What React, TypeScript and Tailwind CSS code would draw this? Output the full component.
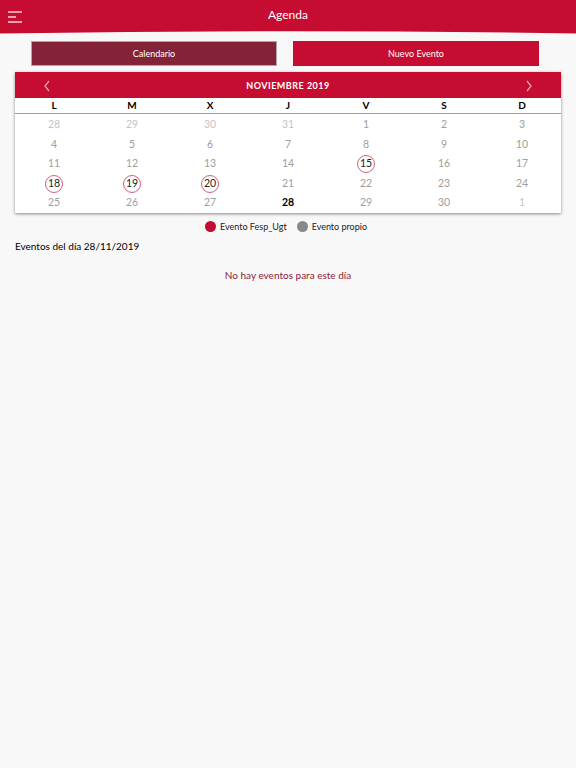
import React from 'react';

const RED = 'bg-[#c60c30]';

type Day = { n: number; out?: boolean; event?: boolean; today?: boolean };

const weeks: Day[][] = [
  [{ n: 28, out: true }, { n: 29, out: true }, { n: 30, out: true }, { n: 31, out: true }, { n: 1 }, { n: 2 }, { n: 3 }],
  [{ n: 4 }, { n: 5 }, { n: 6 }, { n: 7 }, { n: 8 }, { n: 9 }, { n: 10 }],
  [{ n: 11 }, { n: 12 }, { n: 13 }, { n: 14 }, { n: 15, event: true }, { n: 16 }, { n: 17 }],
  [{ n: 18, event: true }, { n: 19, event: true }, { n: 20, event: true }, { n: 21 }, { n: 22 }, { n: 23 }, { n: 24 }],
  [{ n: 25 }, { n: 26 }, { n: 27 }, { n: 28, today: true }, { n: 29 }, { n: 30 }, { n: 1, out: true }],
];

const DayCell: React.FC<{ day: Day }> = ({ day }) => {
  let cls = 'text-[#9e9e9e]';
  if (day.out) cls = 'text-[#c4c4c4]';
  if (day.today) cls = 'text-black font-bold';
  return (
    <div className="flex items-center justify-center h-[19.6px]">
      {day.event ? (
        <span className="flex items-center justify-center w-[18px] h-[18px] rounded-full border border-[#d8607a] text-[#222] text-[10.5px]">
          {day.n}
        </span>
      ) : (
        <span className={`text-[10.5px] ${cls}`}>{day.n}</span>
      )}
    </div>
  );
};

const App: React.FC = () => {
  return (
    <div className="w-[576px] h-[768px] bg-[#f8f8f8] overflow-hidden" style={{ fontFamily: 'Lato, "Open Sans", sans-serif' }}>
      {/* top bar */}
      <div className="relative">
        <div className={`${RED} h-[30px] flex items-center justify-center relative`}>
          <div className="absolute left-[8px] top-[11px] flex flex-col gap-[3px]">
            <span className="block w-[14px] h-[2px] bg-[#e8a0ae]" />
            <span className="block w-[8px] h-[2px] bg-[#e8a0ae]" />
            <span className="block w-[14px] h-[2px] bg-[#e8a0ae]" />
          </div>
          <span className="text-white text-[12px]">Agenda</span>
        </div>
        <svg className="block" width="576" height="4" viewBox="0 0 576 4" preserveAspectRatio="none">
          <path d="M0 0 H576 V3.5 Q288 -1 0 3.5 Z" fill="#c60c30" />
        </svg>
      </div>

      {/* tabs */}
      <div className="flex gap-[16px] mt-[7px] pl-[31px]">
        <button className="w-[246px] h-[25px] bg-[#842238] border border-[#a9a9a9] text-white text-[9px]">Calendario</button>
        <button className={`w-[246px] h-[25px] ${RED} text-white text-[9px]`}>Nuevo Evento</button>
      </div>

      {/* calendar */}
      <div className="mx-[15px] mt-[6px] bg-white shadow-[0_1px_3px_rgba(0,0,0,0.45)]">
        <div className={`${RED} h-[26px] pt-[2px] flex items-center justify-between px-[28px] text-white`}>
          <svg width="8" height="12" viewBox="0 0 8 12"><path d="M6 1 L2 6 L6 11" fill="none" stroke="#f0a0b0" strokeWidth="1.3" /></svg>
          <span className="text-[9px] font-bold tracking-[0.5px]">NOVIEMBRE 2019</span>
          <svg width="8" height="12" viewBox="0 0 8 12"><path d="M2 1 L6 6 L2 11" fill="none" stroke="#f0a0b0" strokeWidth="1.3" /></svg>
        </div>
        <div className="grid grid-cols-7 h-[16px] items-center border-b border-[#c98a98]">
          {['L', 'M', 'X', 'J', 'V', 'S', 'D'].map((d) => (
            <div key={d} className="text-center text-[10px] font-bold text-black">{d}</div>
          ))}
        </div>
        <div className="pt-[1px]">
          {weeks.map((w, i) => (
            <div key={i} className="grid grid-cols-7">
              {w.map((d, j) => (
                <DayCell key={j} day={d} />
              ))}
            </div>
          ))}
        </div>
      </div>

      {/* legend */}
      <div className="flex justify-center items-center gap-[10px] mt-[7px] text-[9px] text-[#222] pr-[4px]">
        <div className="flex items-center gap-[4px]">
          <span className="w-[11px] h-[11px] rounded-full bg-[#c60c30]" />
          <span>Evento Fesp_Ugt</span>
        </div>
        <div className="flex items-center gap-[4px]">
          <span className="w-[11px] h-[11px] rounded-full bg-[#848a8e]" />
          <span>Evento propio</span>
        </div>
      </div>

      <div className="px-[15px] mt-[6px] text-[10px] text-black">Eventos del día 28/11/2019</div>
      <div className="text-center mt-[14px] text-[10px] text-[#8c2238]">No hay eventos para este día</div>
    </div>
  );
};

export default App;
